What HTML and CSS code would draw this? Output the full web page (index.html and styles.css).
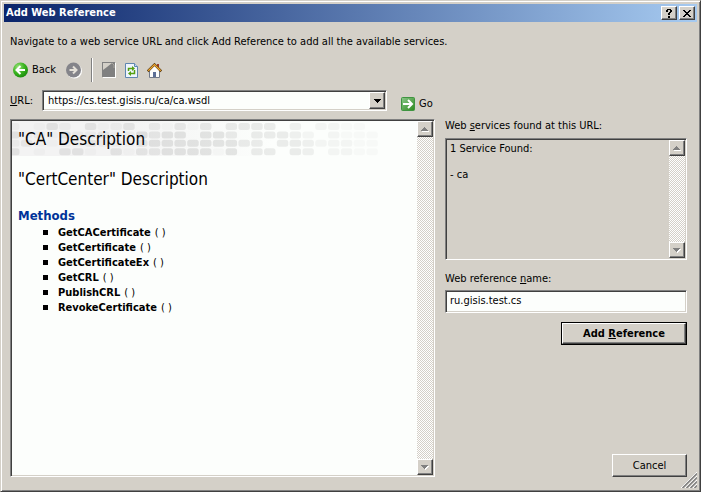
FILE: index.html
```html
<!DOCTYPE html>
<html lang="en">
<head>
    <meta charset="UTF-8">
    <meta name="viewport" content="width=device-width, initial-scale=1.0">
    <title>Add Web Reference</title>
    <link rel="stylesheet" href="styles.css">
</head>
<body>
    <form class="window">
        <header class="titlebar">
            <h1>Add Web Reference</h1>
            <button type="button" class="raised caption-btn" aria-label="Help">
                <svg width="8" height="9" viewBox="0 0 8 9" shape-rendering="crispEdges"><path d="M2 0h4v1h-4zM1 1h2v2h-2zM5 1h2v2h-2zM4 3h2v1h-2zM3 4h2v2h-2zM3 7h2v2h-2z"/></svg>
            </button>
            <button type="button" class="raised caption-btn" aria-label="Close">
                <svg width="8" height="7" viewBox="0 0 8 7" shape-rendering="crispEdges"><path d="M0 0h2v1h-2zM6 0h2v1h-2zM1 1h2v1h-2zM5 1h2v1h-2zM2 2h4v1h-4zM3 3h2v1h-2zM2 4h4v1h-4zM1 5h2v1h-2zM5 5h2v1h-2zM0 6h2v1h-2zM6 6h2v1h-2z"/></svg>
            </button>
        </header>
        <div class="content">
            <p class="intro">Navigate to a web service URL and click Add Reference to add all the available services.</p>

            <div class="toolbar">
                <button type="button" class="tool back">
                    <svg width="16" height="16" viewBox="0 0 16 16">
                        <defs><radialGradient id="green" cx=".35" cy=".3" r=".8"><stop offset="0" stop-color="#9be37c"/><stop offset=".5" stop-color="#3cb521"/><stop offset="1" stop-color="#148408"/></radialGradient></defs>
                        <circle cx="8.500" cy="8" r="7.5" fill="url(#green)"/>
                        <path d="M13 8H5M8.500 4l-4 4 4 4" fill="none" stroke="#fff" stroke-width="2"/>
                    </svg>
                    <span>Back</span>
                </button>
                <button type="button" class="tool forward" aria-label="Forward" disabled>
                    <svg width="17" height="17" viewBox="0 0 17 17">
                        <circle cx="9.500" cy="9" r="7.500" fill="#fff"/>
                        <circle cx="8.500" cy="8" r="7.500" fill="#84848a"/>
                        <path d="M4.500 8h7M8 4.500l3.500 3.500-3.500 3.500" fill="none" stroke="#e4e0d8" stroke-width="2"/>
                    </svg>
                </button>
                <span class="separator"></span>
                <button type="button" class="tool" aria-label="Stop" disabled>
                    <svg width="14" height="16" viewBox="0 0 14 16">
                        <path d="M1 1h13v15H1z" fill="#fff"/>
                        <path d="M0 0h13v15H0z" fill="#808080"/>
                        <path d="M1 1h9L5 5 1 8z" fill="#d4d0c8"/>
                        <path d="M10 1l2 2v3" fill="none" stroke="#aaa69e"/>
                    </svg>
                </button>
                <button type="button" class="tool" aria-label="Refresh">
                    <svg width="13" height="15" viewBox="0 0 13 15">
                        <path d="M.5.500h9l3 3v11H.5z" fill="#eef5fd" stroke="#5f86b0"/>
                        <path d="M9.500.500v3h3" fill="#c4d8ee" stroke="#5f86b0"/>
                        <path d="M3.500 8V5.500H8M9.500 7v3.500H5" fill="none" stroke="#55a012" stroke-width="1.500"/>
                        <path d="M7 3l3 2.500L7 8zM6 8l-3 2.500L6 13z" fill="#55a012"/>
                    </svg>
                </button>
                <button type="button" class="tool" aria-label="Home">
                    <svg width="15" height="15" viewBox="0 0 15 15">
                        <path d="M10 1h2v5h-2z" fill="#a03c28"/>
                        <path d="M2.500 7.500l5-5 5 5v7h-10z" fill="#fdfdfb" stroke="#707888"/>
                        <path d="M.7 8.300l6.800-6.800 6.800 6.800" fill="none" stroke="#5a3a10" stroke-width="2.400"/>
                        <path d="M1.300 7.800l6.200-6.200 6.200 6.200" fill="none" stroke="#f0a830" stroke-width="1.300"/>
                        <path d="M6 9h3v5H6z" fill="#5c6f96"/>
                    </svg>
                </button>
            </div>

            <div class="url-row">
                <label for="url"><u>U</u>RL:</label>
                <div class="combo sunken">
                    <select id="url">
                        <option>https://cs.test.gisis.ru/ca/ca.wsdl</option>
                    </select>
                    <span class="raised combo-arrow">
                        <svg width="7" height="4" viewBox="0 0 7 4" shape-rendering="crispEdges"><path d="M0 0h7v1h-7zM1 1h5v1h-5zM2 2h3v1h-3zM3 3h1v1h-1z"/></svg>
                    </span>
                </div>
                <button type="button" class="tool go">
                    <svg width="14" height="14" viewBox="0 0 14 14">
                        <defs><linearGradient id="goFill" x2="1" y2="1"><stop offset="0" stop-color="#8cc88c"/><stop offset="1" stop-color="#2c8a1c"/></linearGradient></defs>
                        <rect x=".5" y=".5" width="13" height="13" rx="1" fill="url(#goFill)" stroke="#3f9440"/>
                        <path d="M2 7h8M7 3l4 4-4 4" fill="none" stroke="#fff" stroke-width="2"/>
                    </svg>
                    <span>Go</span>
                </button>
            </div>

            <div class="main">
                <div class="browser sunken">
                    <div class="page">
                        <div class="banner">
                            <svg class="tiles" id="tiles" width="406" height="35" aria-hidden="true"></svg>
                            <h2>"CA" Description</h2>
                        </div>
                        <h2>"CertCenter" Description</h2>
                        <h3>Methods</h3>
                        <ul class="methods">
                            <li><a href="#">GetCACertificate</a> ( )</li>
                            <li><a href="#">GetCertificate</a> ( )</li>
                            <li><a href="#">GetCertificateEx</a> ( )</li>
                            <li><a href="#">GetCRL</a> ( )</li>
                            <li><a href="#">PublishCRL</a> ( )</li>
                            <li><a href="#">RevokeCertificate</a> ( )</li>
                        </ul>
                    </div>
                    <div class="scrollbar">
                        <button type="button" class="raised" aria-label="Scroll up" disabled>
                            <svg width="8" height="5" viewBox="0 0 8 5" shape-rendering="crispEdges"><path d="M1 4h7v1h-7z" fill="#fff"/><path d="M3 0h1v1h-1zM2 1h3v1h-3zM1 2h5v1h-5zM0 3h7v1h-7z" fill="#808080"/></svg>
                        </button>
                        <button type="button" class="raised" aria-label="Scroll down" disabled>
                            <svg width="8" height="5" viewBox="0 0 8 5" shape-rendering="crispEdges"><path d="M1 1h7v1h-7zM2 2h5v1h-5zM3 3h3v1h-3zM4 4h1v1h-1z" fill="#fff"/><path d="M0 0h7v1h-7zM1 1h5v1h-5zM2 2h3v1h-3zM3 3h1v1h-1z" fill="#808080"/></svg>
                        </button>
                    </div>
                </div>

                <div class="side">
                    <label for="services">Web <u>s</u>ervices found at this URL:</label>
                    <div class="services sunken">
                        <textarea id="services" readonly>1 Service Found:

- ca</textarea>
                        <div class="scrollbar">
                            <button type="button" class="raised" aria-label="Scroll up" disabled>
                                <svg width="8" height="5" viewBox="0 0 8 5" shape-rendering="crispEdges"><path d="M1 4h7v1h-7z" fill="#fff"/><path d="M3 0h1v1h-1zM2 1h3v1h-3zM1 2h5v1h-5zM0 3h7v1h-7z" fill="#808080"/></svg>
                            </button>
                            <button type="button" class="raised" aria-label="Scroll down" disabled>
                                <svg width="8" height="5" viewBox="0 0 8 5" shape-rendering="crispEdges"><path d="M1 1h7v1h-7zM2 2h5v1h-5zM3 3h3v1h-3zM4 4h1v1h-1z" fill="#fff"/><path d="M0 0h7v1h-7zM1 1h5v1h-5zM2 2h3v1h-3zM3 3h1v1h-1z" fill="#808080"/></svg>
                            </button>
                        </div>
                    </div>
                    <label for="refName">Web reference <u>n</u>ame:</label>
                    <input type="text" id="refName" class="sunken" value="ru.gisis.test.cs">
                    <button type="submit" class="add-btn"><span class="raised">Add <u>R</u>eference</span></button>
                    <button type="button" class="raised cancel-btn">Cancel</button>
                </div>
            </div>
        </div>
        <svg class="grip" width="16" height="16" viewBox="0 0 16 16">
            <path d="M0 16L16 0M4 16L16 4M8 16L16 8M12 16l4-4" stroke="#fff"/>
            <path d="M1.500 16L16 1.500M5.500 16L16 5.500M9.500 16L16 9.500M13.500 16l2.500-2.500" stroke="#808080" stroke-width="1.500"/>
        </svg>
    </form>
    <script src="script.js"></script>
</body>
</html>
```
FILE: styles.css
```css
* { box-sizing: border-box; }
body { margin: 0; font-family: "DejaVu Sans Condensed", Tahoma, sans-serif; font-size: 11px; line-height: 14px; color: #000; background: #d4d0c8; }
h1, h2, h3, p, ul { margin: 0; padding: 0; font-weight: normal; }
button, input, select, textarea { font: inherit; color: inherit; margin: 0; border-radius: 0; outline: none; }
svg { display: block; flex: none; }

.raised { background: #d4d0c8; border: 1px solid; border-color: #fff #404040 #404040 #fff; box-shadow: inset -1px -1px #808080; }
.sunken { background: #fcfefc; border: 1px solid; border-color: #808080 #fff #fff #808080; box-shadow: inset 1px 1px #404040, inset -1px -1px #d4d0c8; }

.window { position: relative; display: flex; flex-direction: column; min-height: 100vh; padding: 3px; border: 1px solid; border-color: #d4d0c8 #404040 #404040 #d4d0c8; box-shadow: inset 1px 1px #fff, inset -1px -1px #808080; }

.titlebar { display: flex; align-items: center; gap: 2px; height: 18px; padding: 0 2px; background: linear-gradient(to right, #0a246a, #a6caf0); }
.titlebar h1 { flex: 1; font-size: 11px; font-weight: bold; color: #fff; }
.caption-btn { display: flex; align-items: center; justify-content: center; width: 16px; height: 14px; padding: 0; }

.content { flex: 1; display: flex; flex-direction: column; padding: 13px 10px 11px 6px; }

.toolbar { display: flex; align-items: center; gap: 9px; height: 24px; margin-top: 9px; padding-left: 2px; }
.tool { display: flex; align-items: center; gap: 4px; padding: 0; border: none; background: none; }
.separator { width: 2px; height: 24px; background: #808080; border-right: 1px solid #fff; }

.url-row { display: flex; align-items: flex-end; margin-top: 8px; }
.url-row label { width: 32px; align-self: center; }
.combo { position: relative; width: 345px; height: 21px; padding: 2px; }
.combo select { display: block; width: 100%; height: 15px; padding: 0 20px 0 3px; border: none; background: none; appearance: none; }
.combo-arrow { position: absolute; top: 1px; right: 1px; bottom: 1px; width: 16px; display: flex; align-items: center; justify-content: center; pointer-events: none; }
.go { margin-left: 14px; }

.main { flex: 1; display: grid; grid-template-columns: 1fr 242px; gap: 10px; margin-top: 8px; }
.browser, .services { display: flex; padding: 1px; }
.page { flex: 1; min-width: 0; }
.page h2 { padding: 0 6px; font-size: 17px; line-height: 22px; }
.banner { position: relative; height: 35px; padding-top: 7px; margin-bottom: 12px; background: linear-gradient(to right, #f3f3f3 100px, #fcfefc 260px); }
.banner h2 { position: relative; }
.tiles { position: absolute; top: 0; left: 0; width: 100%; }
.page h3 { margin-top: 17px; padding: 0 6px; font-size: 13px; line-height: 18px; font-weight: bold; color: #039; }
.methods { list-style: none; padding-left: 31px; }
.methods li { display: flex; align-items: center; gap: 4px; line-height: 15px; }
.methods li::before { content: ""; width: 5px; height: 5px; margin-right: 6px; background: #000; }
.methods a { font-weight: bold; color: #000; text-decoration: none; }

.scrollbar { display: flex; flex-direction: column; justify-content: space-between; width: 16px; background: repeating-conic-gradient(#fff 0 25%, #d4d0c8 0 50%) 0 0 / 2px 2px; }
.scrollbar button { display: flex; align-items: center; justify-content: center; width: 16px; height: 16px; padding: 0; }

.side { display: flex; flex-direction: column; }
.services { height: 122px; margin: 5px 0 12px; background: #d4d0c8; }
.services textarea { flex: 1; min-width: 0; padding: 2px 3px; border: none; background: none; resize: none; line-height: 13px; overflow: hidden; }
.side input { height: 23px; margin-top: 4px; padding: 0 4px 2px; }
.add-btn { display: flex; align-self: flex-end; width: 126px; height: 23px; margin-top: 9px; padding: 0; border: 1px solid #000; background: #d4d0c8; font-weight: bold; }
.add-btn span { flex: 1; line-height: 19px; }
.cancel-btn { align-self: flex-end; width: 75px; height: 23px; margin-top: auto; padding: 0; }
.grip { position: absolute; right: 3px; bottom: 3px; }
```
FILE: script.js
```js
// banner mosaic: one digit per tile, 0 = empty, higher = darker
const rows = [
    "20142041240314140444403022110",
    "41214223125455055404443202111",
    "23112132214555555544044322211",
    "40104410414455551504404302211"
];
const tiles = document.getElementById("tiles");
const ns = "http://www.w3.org/2000/svg";
rows.forEach((row, y) => {
    [...row].forEach((shade, x) => {
        const tile = document.createElementNS(ns, "rect");
        tile.setAttribute("x", x * 12.8 - 4);
        tile.setAttribute("y", y * 8.4 + 2);
        tile.setAttribute("width", 11.5);
        tile.setAttribute("height", 7);
        tile.setAttribute("rx", 2.5);
        tile.setAttribute("fill-opacity", shade * 0.018);
        tiles.appendChild(tile);
    });
});
```
